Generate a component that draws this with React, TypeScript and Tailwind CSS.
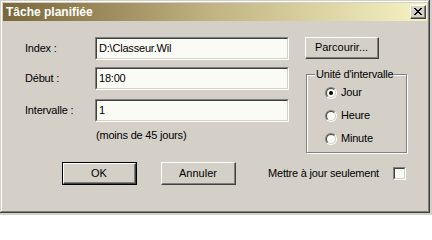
import React from "react";

const font = { fontFamily: '"Liberation Sans", Arial, sans-serif' };

function Sunken({ children, className = "" }: { children?: React.ReactNode; className?: string }) {
  return (
    <div
      className={
        "border-t border-l border-t-[#808080] border-l-[#808080] border-b border-r border-b-white border-r-white " +
        className
      }
    >
      <div className="h-full w-full border-t border-l border-t-[#404040] border-l-[#404040] border-b border-r border-b-[#d4d0c8] border-r-[#d4d0c8] bg-[#fbfbf6]">
        {children}
      </div>
    </div>
  );
}

function Button({ children, className = "", isDefault = false }: { children: React.ReactNode; className?: string; isDefault?: boolean }) {
  const inner = (
    <div className="h-full w-full border-t border-l border-t-white border-l-white border-b border-r border-b-[#404040] border-r-[#404040]">
      <div className="flex h-full w-full items-center justify-center border-b border-r border-b-[#808080] border-r-[#808080] text-[11px] text-black">
        {children}
      </div>
    </div>
  );
  if (isDefault) {
    return <div className={"border border-black " + className}>{inner}</div>;
  }
  return <div className={className}>{inner}</div>;
}

function Radio({ label, checked = false }: { label: string; checked?: boolean }) {
  return (
    <div className="flex h-[23px] items-center">
      <div className="flex h-[12px] w-[12px] items-center justify-center rounded-full border border-t-[#808080] border-l-[#808080] border-b-white border-r-white">
        <div className="flex h-full w-full items-center justify-center rounded-full border border-t-[#404040] border-l-[#404040] border-b-[#d4d0c8] border-r-[#d4d0c8] bg-[#fbfbf6]">
          {checked && <div className="h-[4px] w-[4px] rounded-full bg-black" />}
        </div>
      </div>
      <span className="ml-[4px] text-[11px] tracking-[-0.2px] text-black">{label}</span>
    </div>
  );
}

export default function App() {
  return (
    <div className="h-[215px] w-[432px] bg-[#d4d0c8]" style={font}>
      <div className="flex h-[213px] w-[430px] flex-col bg-[#d4d0c8] p-[3px] shadow-[inset_-1px_-1px_#404040,inset_1px_1px_#d4d0c8,inset_-2px_-2px_#808080,inset_2px_2px_#ffffff]">
        {/* Title bar */}
        <div className="flex h-[18px] items-center justify-between bg-gradient-to-r from-[#7a673b] via-[#c2b483] to-[#f7f3c4] pl-[3px] pr-[1px]">
          <span className="text-[12px] font-bold leading-none text-white">Tâche planifiée</span>
          <div className="h-[14px] w-[16px] border-t border-l border-t-white border-l-white border-b border-r border-b-[#404040] border-r-[#404040] bg-[#d4d0c8]">
            <div className="flex h-full w-full items-center justify-center border-b border-r border-b-[#808080] border-r-[#808080]">
              <svg width="8" height="7" viewBox="0 0 8 7" shapeRendering="crispEdges">
                <path
                  fill="#000"
                  d="M0 0h2v1H0zM6 0h2v1H6zM1 1h2v1H1zM5 1h2v1H5zM2 2h4v1H2zM3 3h2v1H3zM2 4h4v1H2zM1 5h2v1H1zM5 5h2v1H5zM0 6h2v1H0zM6 6h2v1H6z"
                />
              </svg>
            </div>
          </div>
        </div>

        {/* Main */}
        <div className="flex pt-[16px]">
          <div className="ml-[22px] flex w-[264px] flex-col">
            <div className="flex h-[23px] items-center">
              <span className="w-[70px] text-[11px] tracking-[-0.2px] text-black">Index :</span>
              <Sunken className="h-[23px] w-[194px]">
                <div className="flex h-full items-center pl-[2px] text-[11px] tracking-[-0.2px] text-black">D:\Classeur.Wil</div>
              </Sunken>
            </div>
            <div className="mt-[7px] flex h-[23px] items-center">
              <span className="w-[70px] text-[11px] tracking-[-0.2px] text-black">Début :</span>
              <Sunken className="h-[23px] w-[194px]">
                <div className="flex h-full items-center pl-[2px] text-[11px] tracking-[-0.2px] text-black">18:00</div>
              </Sunken>
            </div>
            <div className="mt-[9px] flex h-[23px] items-center">
              <span className="w-[70px] text-[11px] tracking-[-0.2px] text-black">Intervalle :</span>
              <Sunken className="h-[23px] w-[194px]">
                <div className="flex h-full items-center pl-[2px] text-[11px] tracking-[-0.2px] text-black">1</div>
              </Sunken>
            </div>
            <div className="ml-[71px] mt-[7px] text-[11px] leading-[13px] tracking-[-0.2px] text-black">(moins de 45 jours)</div>
          </div>

          <div className="ml-[16px] flex flex-col">
            <Button className="h-[22px] w-[74px]">Parcourir...</Button>
            <div className="relative ml-[1px] mt-[15px] h-[79px] w-[101px] border border-[#808080] shadow-[inset_1px_1px_#ffffff,1px_1px_#ffffff]">
              <span className="absolute left-[8px] top-[-7px] bg-[#d4d0c8] px-[1px] text-[11px] leading-[13px] tracking-[-0.2px] text-black">
                Unité d'intervalle
              </span>
              <div className="flex flex-col pl-[18px] pt-[6px]">
                <Radio label="Jour" checked />
                <Radio label="Heure" />
                <Radio label="Minute" />
              </div>
            </div>
          </div>
        </div>

        {/* Bottom row */}
        <div className="mt-[9px] flex items-center">
          <Button isDefault className="ml-[59px] h-[23px] w-[75px]">OK</Button>
          <Button className="ml-[24px] h-[23px] w-[75px]">Annuler</Button>
          <span className="ml-[32px] text-[11px] tracking-[-0.2px] text-black">Mettre à jour seulement</span>
          <Sunken className="ml-[14px] h-[13px] w-[13px]" />
        </div>
      </div>
    </div>
  );
}
